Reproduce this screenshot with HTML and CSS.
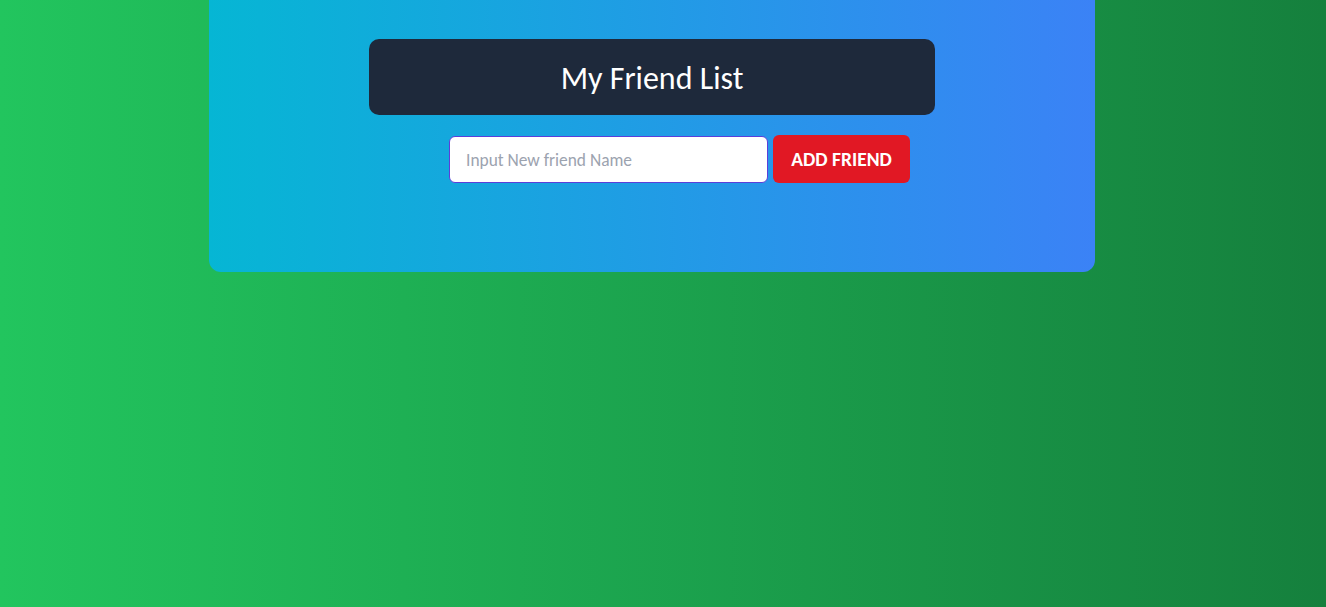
FILE: index.html
```html
<!DOCTYPE html>
<html lang="en">
<head>
<meta charset="utf-8">
<title>My Friend List</title>
<link rel="stylesheet" href="styles.css">
</head>
<body>
  <main class="card">
    <h1 class="title">My Friend List</h1>
    <form class="add-row">
      <input class="name-input" type="text" placeholder="Input New friend Name">
      <button class="add-btn" type="button">ADD FRIEND</button>
    </form>
  </main>
</body>
</html>
```
FILE: styles.css
```css
html, body {
  margin: 0;
  height: 100%;
}
body {
  background: linear-gradient(to right, #22c55e, #15803d);
  font-family: Carlito, Calibri, Lato, "Open Sans", sans-serif;
  padding-right: 22px;
  box-sizing: border-box;
}
.card {
  width: 886px;
  height: 272px;
  margin: 0 auto;
  box-sizing: border-box;
  padding-top: 39px;
  background: linear-gradient(to right, #06b6d4, #3b82f6);
  border-radius: 0 0 12px 12px;
  display: flex;
  flex-direction: column;
}
.title {
  width: 566px;
  height: 76px;
  margin: 0 auto;
  background: #1e293b;
  color: #ffffff;
  border-radius: 10px;
  font-weight: 400;
  font-size: 32px;
  display: flex;
  align-items: center;
  justify-content: center;
  padding-top: 2px;
  box-sizing: border-box;
}
.add-row {
  margin: 20px 0 0 240px;
  display: flex;
  align-items: flex-end;
  gap: 5px;
}
.name-input {
  width: 319px;
  height: 47px;
  box-sizing: border-box;
  border: 1px solid #5b3fd9;
  border-radius: 6px;
  padding: 0 16px;
  font-family: inherit;
  font-size: 17.4px;
  color: #334155;
  background: #fff;
  outline: none;
}
.name-input::placeholder {
  color: #9ca3af;
}
.add-btn {
  width: 137px;
  height: 48px;
  border: none;
  border-radius: 6px;
  background: #e11824;
  color: #fff;
  font-family: inherit;
  font-weight: 700;
  font-size: 19.5px;
  cursor: pointer;
  padding: 0;
}
```
